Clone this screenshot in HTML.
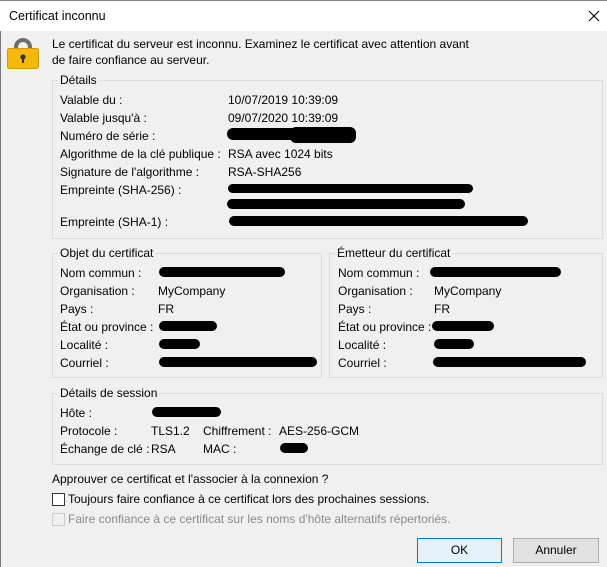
<!DOCTYPE html>
<html><head><meta charset="utf-8"><style>
*{margin:0;padding:0;box-sizing:border-box}
body{width:607px;height:567px;background:#f0f0f0;font-family:"Liberation Sans",sans-serif;font-size:12px;color:#000;position:relative;overflow:hidden}
.a{position:absolute;white-space:nowrap;line-height:14px}
.g{position:absolute;border:1px solid #dcdcdc}
.lg{position:absolute;background:#f0f0f0;padding:0 2px;line-height:14px}
.r{position:absolute;background:#000;border-radius:6px}
</style></head><body>
<div style="position:absolute;left:0;top:0;width:607px;height:31px;background:#fff;border-top:1px solid #888"></div>
<div style="position:absolute;left:0;top:31px;width:1px;height:536px;background:#777"></div>
<div class="a" style="left:9px;top:9px;font-size:12.5px">Certificat inconnu</div>
<svg style="position:absolute;left:588px;top:10px" width="12" height="12"><path d="M1 1L11 11M11 1L1 11" stroke="#000" stroke-width="1.1"/></svg>
<svg style="position:absolute;left:7px;top:37px" width="32" height="33"><path d="M9 13V10a7 7 0 0 1 14 0v3" fill="none" stroke="#6e6e6e" stroke-width="4"/><rect x="0.5" y="11.5" width="31" height="20" rx="2" fill="#f5b80c" stroke="#d69a00"/><circle cx="16" cy="20" r="2.6" fill="#333"/><rect x="15" y="20" width="2" height="6" fill="#333"/></svg>
<div class="a" style="left:52px;top:37px">Le certificat du serveur est inconnu. Examinez le certificat avec attention avant</div>
<div class="a" style="left:52px;top:53px">de faire confiance au serveur.</div>

<div class="g" style="left:52px;top:80px;width:551px;height:159px"></div>
<div class="lg" style="left:58px;top:73px">Détails</div>
<div class="a" style="left:60px;top:93px">Valable du :</div><div class="a" style="left:228px;top:93px">10/07/2019 10:39:09</div>
<div class="a" style="left:60px;top:111px">Valable jusqu'à :</div><div class="a" style="left:228px;top:111px">09/07/2020 10:39:09</div>
<div class="a" style="left:60px;top:129px">Numéro de série :</div><div class="r" style="left:227px;top:128px;width:129px;height:12px"></div><div class="r" style="left:290px;top:127px;width:66px;height:16px"></div>
<div class="a" style="left:60px;top:147px">Algorithme de la clé publique :</div><div class="a" style="left:228px;top:147px">RSA avec 1024 bits</div>
<div class="a" style="left:60px;top:165px">Signature de l'algorithme :</div><div class="a" style="left:228px;top:165px">RSA-SHA256</div>
<div class="a" style="left:60px;top:183px">Empreinte (SHA-256) :</div><div class="r" style="left:228px;top:184px;width:245px;height:9px"></div>
<div class="r" style="left:227px;top:199px;width:238px;height:10px"></div>
<div class="a" style="left:60px;top:215px">Empreinte (SHA-1) :</div><div class="r" style="left:229px;top:216px;width:299px;height:10px"></div>

<div class="g" style="left:52px;top:253px;width:270px;height:125px"></div>
<div class="lg" style="left:58px;top:246px">Objet du certificat</div>
<div class="a" style="left:60px;top:266px">Nom commun :</div><div class="r" style="left:159px;top:267px;width:126px;height:10px"></div>
<div class="a" style="left:60px;top:284px">Organisation :</div><div class="a" style="left:158px;top:284px">MyCompany</div>
<div class="a" style="left:60px;top:302px">Pays :</div><div class="a" style="left:158px;top:302px">FR</div>
<div class="a" style="left:60px;top:320px">État ou province :</div><div class="r" style="left:159px;top:321px;width:58px;height:10px"></div>
<div class="a" style="left:60px;top:338px">Localité :</div><div class="r" style="left:159px;top:339px;width:41px;height:10px"></div>
<div class="a" style="left:60px;top:356px">Courriel :</div><div class="r" style="left:159px;top:357px;width:158px;height:10px"></div>

<div class="g" style="left:329px;top:253px;width:274px;height:125px"></div>
<div class="lg" style="left:335px;top:246px">Émetteur du certificat</div>
<div class="a" style="left:338px;top:266px">Nom commun :</div><div class="r" style="left:430px;top:267px;width:131px;height:10px"></div>
<div class="a" style="left:338px;top:284px">Organisation :</div><div class="a" style="left:434px;top:284px">MyCompany</div>
<div class="a" style="left:338px;top:302px">Pays :</div><div class="a" style="left:434px;top:302px">FR</div>
<div class="a" style="left:338px;top:320px">État ou province :</div><div class="r" style="left:432px;top:321px;width:62px;height:10px"></div>
<div class="a" style="left:338px;top:338px">Localité :</div><div class="r" style="left:434px;top:339px;width:40px;height:10px"></div>
<div class="a" style="left:338px;top:356px">Courriel :</div><div class="r" style="left:433px;top:357px;width:153px;height:10px"></div>

<div class="g" style="left:52px;top:393px;width:551px;height:72px"></div>
<div class="lg" style="left:58px;top:386px">Détails de session</div>
<div class="a" style="left:60px;top:406px">Hôte :</div><div class="r" style="left:152px;top:407px;width:69px;height:10px"></div>
<div class="a" style="left:60px;top:424px">Protocole :</div><div class="a" style="left:151px;top:424px">TLS1.2</div>
<div class="a" style="left:203px;top:424px">Chiffrement :</div><div class="a" style="left:279px;top:424px">AES-256-GCM</div>
<div class="a" style="left:60px;top:442px">Échange de clé :</div><div class="a" style="left:151px;top:442px">RSA</div>
<div class="a" style="left:203px;top:442px">MAC :</div><div class="r" style="left:280px;top:443px;width:28px;height:10px"></div>

<div class="a" style="left:52px;top:472px">Approuver ce certificat et l'associer à la connexion ?</div>
<div style="position:absolute;left:52px;top:493px;width:13px;height:13px;border:1px solid #333;background:#fff"></div>
<div class="a" style="left:68px;top:492px">Toujours faire confiance à ce certificat lors des prochaines sessions.</div>
<div style="position:absolute;left:52px;top:513px;width:13px;height:13px;border:1px solid #ccc;background:#f0f0f0"></div>
<div class="a" style="left:68px;top:512px;color:#8a8a8a">Faire confiance à ce certificat sur les noms d'hôte alternatifs répertoriés.</div>

<div style="position:absolute;left:417px;top:538px;width:85px;height:25px;background:#e5f1fb;border:1px solid #0078d7;text-align:center;line-height:23px">OK</div>
<div style="position:absolute;left:513px;top:538px;width:86px;height:25px;background:#e1e1e1;border:1px solid #adadad;text-align:center;line-height:23px">Annuler</div>
</body></html>
